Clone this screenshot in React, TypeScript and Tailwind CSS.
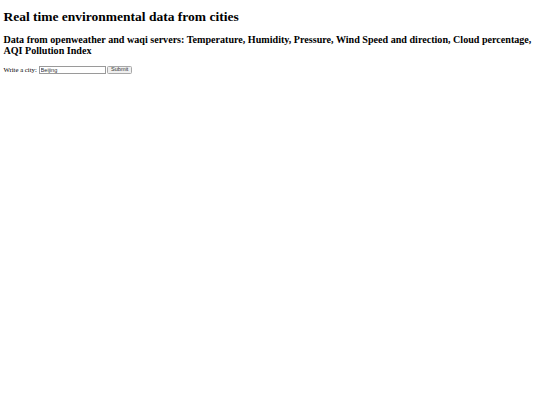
import React, { useState } from 'react';

export default function App() {
  const [city, setCity] = useState('Beijing');

  return (
    <div className="min-h-[405px] w-[540px] bg-white px-[3.4px] pt-[9px] text-black" style={{ fontFamily: '"Liberation Serif", "Times New Roman", serif' }}>
      <h1 className="text-[13.5px] font-bold leading-[15.5px]">Real time environmental data from cities</h1>
      <h2 className="mt-[9px] text-[10.1px] font-bold leading-[11.6px]">
        Data from openweather and waqi servers: Temperature, Humidity, Pressure, Wind Speed and direction, Cloud percentage, AQI Pollution Index
      </h2>
      <form className="mt-[8.4px] flex items-center text-[6.75px]" onSubmit={e => e.preventDefault()}>
        <span>Write a city:</span>
        <input
          value={city}
          onChange={e => setCity(e.target.value)}
          className="ml-[1.7px] h-[8.5px] w-[67px] border border-[#9a9a9a] bg-white px-[1px] text-[5.6px] leading-none text-[#333] outline-none"
          style={{ fontFamily: '"Liberation Sans", Arial, sans-serif' }}
        />
        <button
          type="submit"
          className="ml-[1.7px] h-[8.5px] w-[25px] rounded-[1.5px] border border-[#a8a8a8] bg-[#efefef] text-[5.6px] leading-none text-[#333]"
          style={{ fontFamily: '"Liberation Sans", Arial, sans-serif' }}
        >
          Submit
        </button>
      </form>
    </div>
  );
}
